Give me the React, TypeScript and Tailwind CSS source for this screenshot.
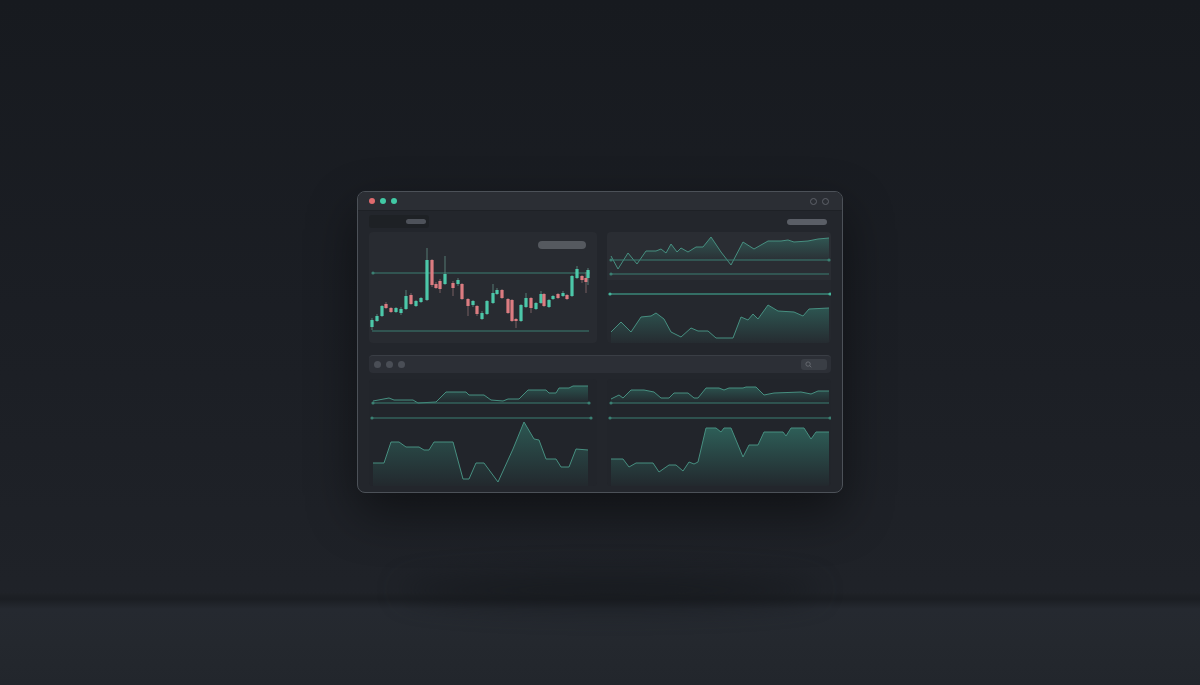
import React from "react";

type Candle = [number, number, number, number, number, boolean];
// x, bodyTop, bodyBottom, wickTop, wickBottom, up
const candles: Candle[] = [
  [371, 319, 326, 317, 329, true],
  [376, 315, 320, 313, 321, true],
  [381, 305, 315, 304, 316, true],
  [385, 303, 307, 301, 308, false],
  [390, 307, 311, 306, 312, false],
  [395, 307, 311, 306, 312, true],
  [400, 308, 312, 306, 314, true],
  [405, 295, 308, 289, 309, true],
  [410, 294, 303, 292, 304, false],
  [415, 300, 305, 299, 306, true],
  [420, 297, 301, 296, 302, true],
  [426, 259, 299, 247, 300, true],
  [431, 259, 284, 258, 286, false],
  [435, 283, 287, 281, 288, false],
  [439, 280, 288, 278, 292, false],
  [444, 273, 283, 255, 284, true],
  [452, 282, 287, 280, 295, false],
  [457, 279, 283, 277, 285, true],
  [461, 283, 298, 282, 299, false],
  [467, 298, 305, 297, 315, false],
  [472, 300, 304, 299, 306, true],
  [476, 305, 313, 304, 315, false],
  [481, 312, 318, 310, 319, true],
  [486, 300, 313, 299, 314, true],
  [492, 292, 302, 283, 303, true],
  [496, 289, 293, 287, 294, true],
  [501, 289, 297, 288, 298, false],
  [507, 298, 312, 297, 313, false],
  [511, 299, 320, 298, 321, false],
  [515, 318, 320, 317, 327, false],
  [520, 304, 320, 303, 321, true],
  [525, 297, 306, 292, 307, true],
  [530, 297, 307, 296, 312, false],
  [535, 302, 308, 301, 309, true],
  [540, 293, 302, 290, 303, true],
  [543, 293, 305, 292, 306, false],
  [548, 299, 306, 298, 307, true],
  [552, 295, 298, 294, 299, true],
  [557, 293, 297, 292, 298, false],
  [562, 292, 295, 290, 296, true],
  [566, 294, 298, 293, 299, false],
  [571, 275, 295, 274, 296, true],
  [576, 268, 277, 265, 278, true],
  [581, 275, 279, 274, 282, false],
  [585, 277, 281, 271, 292, false],
  [587, 269, 277, 267, 284, true],
];

function area(pts: [number, number][], base: number) {
  const line = pts.map((p, i) => `${i ? "L" : "M"}${p[0]} ${p[1]}`).join(" ");
  const fill = `${line} L${pts[pts.length - 1][0]} ${base} L${pts[0][0]} ${base} Z`;
  return { line, fill };
}

function AreaChart({
  pts,
  base,
  vb,
  w,
  h,
  id,
  strength = 0.38,
  children,
}: {
  pts: [number, number][];
  base: number;
  vb: string;
  w: number;
  h: number;
  id: string;
  strength?: number;
  children?: React.ReactNode;
}) {
  const { line, fill } = area(pts, base);
  const top = Math.min(...pts.map((p) => p[1]));
  return (
    <svg width={w} height={h} viewBox={vb} className="block">
      <defs>
        <linearGradient id={id} x1="0" y1={top} x2="0" y2={base} gradientUnits="userSpaceOnUse">
          <stop offset="0" stopColor="#3a9c88" stopOpacity={strength} />
          <stop offset="1" stopColor="#3a9c88" stopOpacity={0.03} />
        </linearGradient>
      </defs>
      <path d={fill} fill={`url(#${id})`} />
      <path d={line} fill="none" stroke="#478f80" strokeWidth="1" strokeLinejoin="round" />
      {children}
    </svg>
  );
}

function HLine({ x1, x2, y, dots = "both", bright = false }: { x1: number; x2: number; y: number; dots?: "both" | "left" | "none"; bright?: boolean }) {
  const c = bright ? "#45b59c" : "#3b7f72";
  return (
    <g>
      <line x1={x1} x2={x2} y1={y} y2={y} stroke={c} strokeWidth="1" />
      {dots !== "none" && <circle cx={x1} cy={y} r="1.6" fill={c} />}
      {dots === "both" && <circle cx={x2} cy={y} r="1.6" fill={c} />}
    </g>
  );
}

export default function App() {
  return (
    <div className="relative h-[685px] w-full overflow-hidden bg-[linear-gradient(to_bottom,#171a1f_0%,#1b1e24_45%,#1f2228_85%,#20242a_100%)] font-['Liberation_Sans',sans-serif]">
      {/* floor */}
      <div className="absolute inset-x-0 bottom-0 h-[92px] bg-[linear-gradient(to_bottom,#1f2227_0px,#1b1e23_6px,#252930_16px,#24282e_50px,#22262c_92px)]" />
      <div className="absolute left-[400px] right-[380px] top-[575px] h-[30px] rounded-[50%] bg-[#14171b] opacity-70 blur-[14px]" />

      <div className="relative flex flex-col items-center pt-[191px]">
        <div className="flex h-[302px] w-[486px] flex-col overflow-hidden rounded-[8px] border border-[#4c5158] bg-[#23262c] shadow-[0_20px_50px_rgba(0,0,0,0.45)]">
          {/* title bar */}
          <div className="flex h-[19px] shrink-0 items-center justify-between border-b border-[#1e2126] bg-[#2b2e34] px-[11px]">
            <div className="flex items-center gap-[5px]">
              <span className="h-[6px] w-[6px] rounded-full bg-[#e06b6e]" />
              <span className="h-[6px] w-[6px] rounded-full bg-[#41c9a4]" />
              <span className="h-[6px] w-[6px] rounded-full bg-[#41c9a4]" />
            </div>
            <div className="flex items-center gap-[5px] pr-[2px]">
              <span className="h-[7px] w-[7px] rounded-full border border-[#5d6168]" />
              <span className="h-[7px] w-[7px] rounded-full border border-[#5d6168]" />
            </div>
          </div>

          <div className="flex flex-1 flex-col px-[11px] pb-[8px]">
            {/* toolbar */}
            <div className="mt-[4px] flex h-[13px] items-center justify-between">
              <div className="flex h-[13px] w-[60px] items-center justify-end rounded-[3px] bg-[#1e2125] pr-[3px]">
                <span className="h-[5px] w-[20px] rounded-full bg-[#4e525a]" />
              </div>
              <span className="mr-[4px] h-[6px] w-[40px] rounded-full bg-[#5a5e66] blur-[0.5px]" />
            </div>

            {/* top panels */}
            <div className="mt-[4px] grid h-[111px] grid-cols-[228px_1fr] gap-[10px]">
              <div className="relative overflow-hidden rounded-[4px] bg-[#282b31]">
                <span className="absolute right-[11px] top-[9px] h-[8px] w-[48px] rounded-full bg-[#55595f] blur-[0.5px]" />
                <svg width={228} height={111} viewBox="368 231 228 111" className="block">
                  <HLine x1={372} x2={589} y={272} dots="left" />
                  <HLine x1={371} x2={588} y={330} dots="none" />
                  {candles.map(([x, bt, bb, wt, wb, up], i) => (
                    <g key={i}>
                      <line x1={x} x2={x} y1={wt} y2={wb} stroke={up ? "#5f8f86" : "#8a6c70"} strokeWidth="0.8" />
                      <rect x={x - 1.6} y={bt} width={3.2} height={Math.max(2, bb - bt)} fill={up ? "#4cc7a9" : "#dc7c81"} />
                    </g>
                  ))}
                </svg>
              </div>

              <div className="flex flex-col overflow-hidden rounded-[4px] bg-[#25282e]">
                <div className="h-[48px] shrink-0 bg-[#2a2d33]">
                  <AreaChart
                    id="g1"
                    w={226}
                    h={48}
                    vb="606 231 226 48"
                    base={259}
                    pts={[
                      [610, 255], [617, 268], [627, 252], [636, 263], [645, 250], [655, 250], [660, 248], [665, 252],
                      [670, 243], [676, 251], [680, 247], [687, 251], [695, 246], [702, 246], [710, 236], [720, 251],
                      [730, 264], [742, 241], [753, 248], [767, 240], [780, 240], [787, 239], [793, 241], [807, 240],
                      [817, 238], [828, 237],
                    ]}
                  >
                    <HLine x1={610} x2={828} y={259} />
                    <HLine x1={610} x2={828} y={273} dots="left" />
                  </AreaChart>
                </div>
                <AreaChart
                  id="g2"
                  w={226}
                  h={63}
                  vb="606 279 226 63"
                  base={342}
                  strength={0.42}
                  pts={[
                    [610, 331], [620, 321], [630, 331], [640, 316], [650, 315], [655, 312], [663, 318], [670, 331],
                    [680, 336], [690, 327], [697, 330], [707, 330], [715, 337], [732, 337], [740, 316], [747, 319],
                    [752, 313], [757, 318], [767, 304], [777, 310], [793, 311], [802, 315], [808, 308], [828, 307],
                  ]}
                >
                  <HLine x1={609} x2={829} y={293} bright />
                </AreaChart>
              </div>
            </div>

            {/* bottom bar */}
            <div className="mt-[12px] flex h-[18px] items-center justify-between rounded-[4px] border-t border-[#3a3e45] bg-[#2c2f36] pl-[5px] pr-[4px]">
              <div className="flex items-center gap-[5px]">
                <span className="h-[7px] w-[7px] rounded-full bg-[#4a4e56]" />
                <span className="h-[7px] w-[7px] rounded-full bg-[#4a4e56]" />
                <span className="h-[7px] w-[7px] rounded-full bg-[#4a4e56]" />
              </div>
              <div className="flex h-[11px] w-[26px] items-center rounded-[3px] bg-[#3a3e45] pl-[4px]">
                <svg width="7" height="7" viewBox="0 0 8 8">
                  <circle cx="3.5" cy="3.5" r="2.5" fill="none" stroke="#6a6e75" strokeWidth="1" />
                  <line x1="5.3" y1="5.3" x2="7.2" y2="7.2" stroke="#6a6e75" strokeWidth="1" />
                </svg>
              </div>
            </div>

            {/* bottom panels */}
            <div className="mt-[6px] grid h-[107px] grid-cols-[228px_1fr] gap-[10px]">
              <div className="flex flex-col overflow-hidden rounded-[4px] bg-[#22252b]">
                <AreaChart
                  id="g3"
                  w={228}
                  h={42}
                  vb="368 378 228 42"
                  base={402}
                  pts={[
                    [372, 400], [388, 397], [393, 399], [402, 399], [412, 399], [417, 402], [435, 401], [445, 391],
                    [465, 391], [468, 394], [483, 394], [490, 399], [502, 400], [507, 398], [518, 398], [527, 389],
                    [545, 389], [548, 392], [555, 392], [558, 387], [568, 387], [572, 385], [587, 385],
                  ]}
                >
                  <HLine x1={372} x2={588} y={402} />
                  <HLine x1={371} x2={590} y={417} />
                </AreaChart>
                <AreaChart
                  id="g4"
                  w={228}
                  h={65}
                  vb="368 420 228 65"
                  base={485}
                  strength={0.42}
                  pts={[
                    [372, 462], [383, 462], [390, 441], [398, 441], [405, 446], [418, 446], [423, 449], [428, 449],
                    [433, 441], [452, 441], [462, 478], [468, 478], [475, 462], [483, 462], [497, 481], [512, 448],
                    [523, 421], [533, 438], [538, 439], [545, 458], [555, 458], [560, 466], [568, 466], [575, 448],
                    [587, 449],
                  ]}
                />
              </div>
              <div className="flex flex-col overflow-hidden rounded-[4px] bg-[#22252b]">
                <AreaChart
                  id="g5"
                  w={226}
                  h={42}
                  vb="606 378 226 42"
                  base={402}
                  pts={[
                    [610, 398], [618, 394], [622, 397], [630, 389], [643, 389], [653, 391], [660, 397], [668, 397],
                    [673, 392], [687, 392], [693, 397], [697, 397], [705, 387], [718, 387], [723, 389], [728, 387],
                    [742, 387], [745, 386], [755, 386], [763, 394], [773, 392], [800, 391], [810, 393], [817, 390],
                    [828, 390],
                  ]}
                >
                  <HLine x1={610} x2={828} y={402} dots="left" />
                  <HLine x1={609} x2={829} y={417} />
                </AreaChart>
                <AreaChart
                  id="g6"
                  w={226}
                  h={65}
                  vb="606 420 226 65"
                  base={485}
                  strength={0.48}
                  pts={[
                    [610, 458], [622, 458], [628, 466], [635, 462], [652, 462], [658, 471], [668, 464], [675, 464],
                    [682, 470], [688, 461], [693, 463], [697, 461], [705, 427], [715, 427], [720, 431], [723, 427],
                    [730, 427], [742, 456], [748, 444], [757, 444], [763, 431], [782, 431], [785, 435], [790, 427],
                    [803, 427], [810, 438], [815, 431], [828, 431],
                  ]}
                />
              </div>
            </div>
          </div>
        </div>
      </div>
    </div>
  );
}
